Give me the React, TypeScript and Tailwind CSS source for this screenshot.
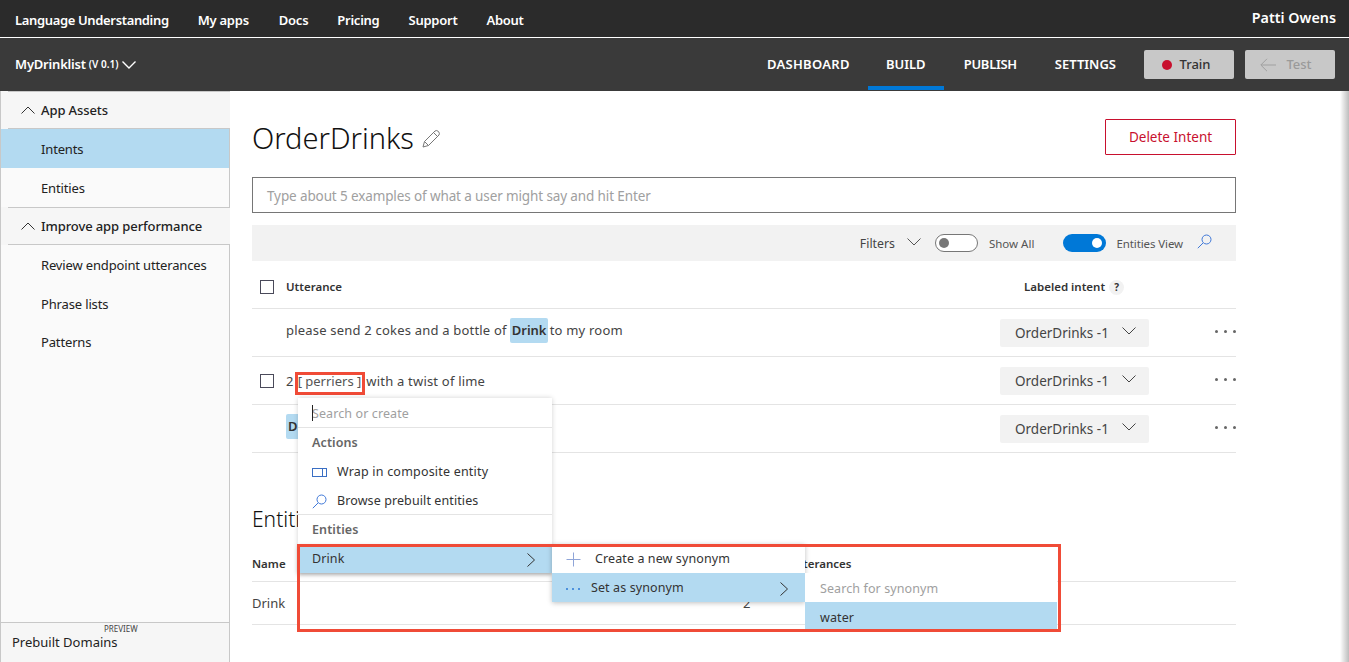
import React from "react";

const font = { fontFamily: '"Noto Sans", "Open Sans", sans-serif' };

function Chevron({ up = false, className = "", sw = 1 }: { up?: boolean; className?: string; sw?: number }) {
  return (
    <svg width="14" height="8" viewBox="0 0 14 8" fill="none" stroke="currentColor" strokeWidth={sw} className={className}>
      <path d={up ? "M0.5 7.5 L7 1 L13.5 7.5" : "M0.5 0.5 L7 7 L13.5 0.5"} />
    </svg>
  );
}

function ChevRight() {
  return (
    <svg width="8" height="14" viewBox="0 0 8 14" fill="none" stroke="#333" strokeWidth="1">
      <path d="M0.5 0.5 L7.5 7 L0.5 13.5" />
    </svg>
  );
}

function Search({ className = "" }: { className?: string }) {
  return (
    <svg width="15" height="15" viewBox="0 0 15 15" fill="none" stroke="#3f78d8" strokeWidth="1" className={className}>
      <circle cx="9.5" cy="5.5" r="4.5" />
      <path d="M6 9 L0.8 14.2" />
    </svg>
  );
}

function Check() {
  return <div className="w-[14px] h-[14px] border border-[#4a4a5a] bg-white" />;
}

function SideHead({ label }: { label: string }) {
  return (
    <div className="bg-[#f6f6f6] -mr-px">
      <div className="h-[1px] ml-[7px] bg-[#c8c8c8]" />
      <div className="h-[36px] flex items-center pl-[20px] gap-[6px] text-[13px] font-medium tracking-[-0.1px] text-[#222]">
        <Chevron up className="text-[#333]" />
        <span className="pt-[2px]">{label}</span>
      </div>
      <div className="h-[1px] ml-[7px] bg-[#c8c8c8]" />
    </div>
  );
}

function SideItem({ label, active = false }: { label: string; active?: boolean }) {
  return (
    <div className={`h-[39px] pt-[2px] flex items-center pl-[40px] text-[13px] tracking-[-0.15px] text-[#222] ${active ? "bg-[#b3daf1]" : ""}`}>{label}</div>
  );
}

function IntentPill() {
  return (
    <div className="w-[149px] h-[28px] pt-[1px] bg-[#f2f2f2] rounded-[2px] flex items-center pl-[15px] text-[13.5px] text-[#444]">
      <span>OrderDrinks -1</span>
      <Chevron className="ml-[13px] text-[#444] -mt-1" />
    </div>
  );
}

function Dots() {
  return (
    <div className="flex gap-[6px] items-center w-[21px] -mt-[2px]">
      <i className="w-[3px] h-[3px] rounded-full bg-[#666]" />
      <i className="w-[3px] h-[3px] rounded-full bg-[#666]" />
      <i className="w-[3px] h-[3px] rounded-full bg-[#666]" />
    </div>
  );
}

function Row({ children, check = false, textClass = "" }: { children: React.ReactNode; check?: boolean; textClass?: string }) {
  return (
    <div className="h-[48px] border-b border-[#e4e4e4] flex items-center relative">
      <div className="w-[34px] pl-[8px] shrink-0 flex">{check ? <Check /> : null}</div>
      <div className={`w-[714px] text-[13px] text-[#444] tracking-[0.2px] flex items-center ${textClass}`}>{children}</div>
      <IntentPill />
      <div className="ml-auto">
        <Dots />
      </div>
    </div>
  );
}

export default function App() {
  return (
    <div style={font} className="w-[1349px] h-[662px] overflow-hidden bg-white flex flex-col relative">
      <header className="h-[37px] bg-[#2b2b2b] flex items-center pl-[15px] pr-[13px] pt-[4px] text-[13px] font-semibold tracking-[-0.25px] text-white shrink-0">
        <span className="mr-[29px] tracking-[-0.35px]">Language Understanding</span>
        <span className="mr-[30px]">My apps</span>
        <span className="mr-[29px]">Docs</span>
        <span className="mr-[29px]">Pricing</span>
        <span className="mr-[29px]">Support</span>
        <span>About</span>
        <span className="ml-auto mb-[6px] text-[14.3px] tracking-normal">Patti Owens</span>
      </header>
      <nav className="h-[54px] border-t border-white bg-[#3a3a3a] flex items-center pl-[15px] pr-[14px] text-white font-semibold shrink-0">
        <span className="text-[13px] tracking-[-0.2px]">MyDrinklist</span>
        <span className="text-[10px] ml-[3px]">(V 0.1)</span>
        <Chevron sw={1.4} className="ml-[4px] text-white" />
        <div className="ml-auto flex h-full items-start text-[13px]">
          <div className="flex items-center mr-[18px] h-[52px] pt-[2px] tracking-[0.3px]">DASHBOARD</div>
          <div className="flex items-center justify-center w-[76px] mr-[20px] border-b-[4px] border-[#0078d7] h-[52px] pt-[6px]">BUILD</div>
          <div className="flex items-center mr-[38px] h-[52px] pt-[2px] tracking-[-0.3px]">PUBLISH</div>
          <div className="flex items-center mr-[28px] h-[52px] pt-[2px]">SETTINGS</div>
          <div className="flex items-center gap-[11px] h-[53px]">
            <button className="w-[90px] h-[29px] pr-[6px] rounded-[2px] bg-[#c8c8c8] text-[#333] font-medium flex items-center justify-center gap-[8px]">
              <i className="w-[10px] h-[10px] rounded-full bg-[#c8102e]" />
              Train
            </button>
            <button className="w-[90px] h-[29px] pr-[8px] rounded-[2px] bg-[#c8c8c8] text-[#9a9a9a] font-medium flex items-center justify-center gap-[10px]">
              <svg width="16" height="14" viewBox="0 0 16 14" fill="none" stroke="#a0a0a0" strokeWidth="1">
                <path d="M16 7 H1 M7 0.8 L0.8 7 L7 13.2" />
              </svg>
              Test
            </button>
          </div>
        </div>
      </nav>
      <div className="flex flex-1 min-h-0">
        <aside className="w-[230px] shrink-0 bg-[#fafafa] border-l border-r border-[#c8c8c8] flex flex-col">
          <SideHead label="App Assets" />
          <SideItem label="Intents" active />
          <SideItem label="Entities" />
          <SideHead label="Improve app performance" />
          <SideItem label="Review endpoint utterances" />
          <SideItem label="Phrase lists" />
          <div className="h-[38px] pt-[2px] flex items-center pl-[40px] text-[13px] tracking-[-0.15px] text-[#222]">Patterns</div>
          <div className="mt-auto h-[40px] border-t border-[#c8c8c8] bg-[#f6f6f6] relative pl-[11px] pt-[10px] text-[13px] text-[#222]">
            <span className="absolute left-[103px] top-0 text-[8px] text-[#444]">PREVIEW</span>
            Prebuilt Domains
          </div>
        </aside>
        <main className="w-[984px] ml-[22px] relative">
          <div className="flex justify-between items-start pt-[28px]">
            <h1 className="text-[29px] leading-[36px] pt-[1px] font-light text-[#111] flex items-center gap-[8px]">
              OrderDrinks
              <svg width="19" height="19" viewBox="0 0 19 19" fill="none" stroke="#777" strokeWidth="1">
                <path d="M1 18 L2.5 12.5 L13 2 Q14.5 0.8 16.5 2.5 Q18 4.5 17 6 L6.5 16.5 Z M2.5 12.5 L6.5 16.5 M11.5 3.5 L15.5 7.5" />
              </svg>
            </h1>
            <button className="w-[131px] h-[36px] border border-[#c8102e] rounded-[1px] text-[13.5px] text-[#c8102e]">
              Delete Intent
            </button>
          </div>
          <div className="mt-[21px] h-[36px] pt-[2px] border border-[#767676] flex items-center pl-[14px] text-[13.5px] tracking-[-0.12px] text-[#a0a0a0]">
            Type about 5 examples of what a user might say and hit Enter
          </div>
          <div className="mt-[12px] h-[36px] bg-[#f2f2f2] flex items-center justify-end pr-[24px] text-[11.5px] text-[#555]">
            <span className="text-[12.3px] text-[#444] pt-[2px]">Filters</span>
            <Chevron className="ml-[12px] text-[#555] -mt-[3px]" />
            <div className="ml-[14px] w-[43px] h-[18px] rounded-full border border-[#777] bg-white flex items-center pl-[3px]">
              <i className="w-[10px] h-[10px] rounded-full bg-[#777]" />
            </div>
            <span className="ml-[11px] pt-[2px]">Show All</span>
            <div className="ml-[29px] w-[43px] h-[18px] rounded-full bg-[#0078d7] flex items-center justify-end pr-[4px]">
              <i className="w-[10px] h-[10px] rounded-full bg-white" />
            </div>
            <span className="ml-[10px] pt-[2px] tracking-[-0.1px]">Entities View</span>
            <Search className="ml-[14px] -mt-[3px]" />
          </div>
          <div className="h-[48px] pt-[5px] border-b border-[#e4e4e4] flex items-center text-[11.5px] font-semibold text-[#333]">
            <div className="w-[34px] pl-[8px] shrink-0 flex">
              <Check />
            </div>
            <span className="w-[738px]">Utterance</span>
            <span>Labeled intent</span>
            <span className="ml-[4px] w-[15px] h-[15px] rounded-full bg-[#f2f2f2] flex items-center justify-center text-[10px] font-bold">?</span>
          </div>
          <Row textClass="-mt-[4px]">
            please send 2 cokes and a bottle of
            <b className="ml-[3px] mr-[2px] px-[2px] h-[25px] w-[38px] leading-[25px] rounded-[2px] bg-[#b3daf1] font-semibold text-[#333] tracking-normal">Drink</b>
            to my room
          </Row>
          <Row check textClass="pt-[2px]">
            2
            <span className="relative ml-[4px] mr-[5px] tracking-normal text-[#555]">
              [ perriers ]
              <span className="absolute -left-[3px] -right-[4px] top-[0px] -bottom-[4px] border-[3px] border-[#f04b37]" />
            </span>
            with a twist of lime
          </Row>
          <Row textClass="-mt-[4px]">
            <b className="px-[2px] h-[25px] leading-[25px] rounded-[2px] bg-[#b3daf1] font-semibold text-[#333] tracking-normal">Drink</b>
          </Row>
          <h2 className="mt-[51px] text-[21px] leading-[30px] font-light text-[#111]">Entities</h2>
          <div className="mt-[15px] h-[33px] pb-[3px] border-b border-[#e4e4e4] flex items-center text-[11.5px] font-semibold text-[#333]">
            <span className="w-[492px]">Name</span>
            <span>Labeled utterances</span>
          </div>
          <div className="h-[43px] pt-[2px] border-b border-[#e4e4e4] flex items-center text-[13px] text-[#444]">
            <span className="w-[491px]">Drink</span>
            <span>2</span>
          </div>

          {/* Entity picker overlay */}
          <div className="absolute left-[46px] top-[307px] w-[254px] bg-white shadow-[0_0_5px_rgba(0,0,0,0.18)] text-[12.5px] tracking-[0.1px] text-[#333]">
            <div className="h-[30px] pt-[3px] border-b border-[#e4e4e4] flex items-center pl-[14px] text-[#a0a0a0] relative">
              <i className="w-[1px] h-[16px] bg-[#222] absolute left-[14px] top-[7px]" />
              Search or create
            </div>
            <div className="h-[29px] pt-[2px] flex items-center pl-[14px] font-semibold text-[#666]">Actions</div>
            <div className="h-[29px] pt-[2px] flex items-center pl-[14px] gap-[10px] tracking-[0.2px]">
              <svg width="15" height="9" viewBox="0 0 15 9" fill="none" stroke="#3a6fc4" strokeWidth="1">
                <rect x="0.5" y="0.5" width="14" height="8" />
                <path d="M10.5 0.5 V8.5" />
              </svg>
              Wrap in composite entity
            </div>
            <div className="h-[29px] pt-[2px] border-b border-[#e4e4e4] flex items-center pl-[14px] gap-[10px]">
              <Search />
              Browse prebuilt entities
            </div>
            <div className="h-[29px] pt-[2px] flex items-center pl-[14px] font-semibold text-[#666]">Entities</div>
            <div className="h-[29px] pt-[2px] bg-[#b3daf1] flex items-center pl-[14px] pr-[17px] justify-between shadow-[0_2px_4px_rgba(0,0,0,0.25)]">
              Drink
              <ChevRight />
            </div>
          </div>
          <div className="absolute left-[300px] top-[453px] w-[253px] bg-white shadow-[0_1px_5px_rgba(0,0,0,0.25)] text-[12.5px] tracking-[0.1px] text-[#333]">
            <div className="h-[29px] pt-[2px] flex items-center pl-[14px] gap-[14px]">
              <svg width="15" height="15" viewBox="0 0 15 15" fill="none" stroke="#8fa5d8" strokeWidth="1">
                <path d="M7.5 0.5 V14.5 M0.5 7.5 H14.5" />
              </svg>
              Create a new synonym
            </div>
            <div className="h-[29px] pt-[2px] bg-[#b3daf1] flex items-center pl-[14px] pr-[17px]">
              <span className="flex gap-[4px] mr-[11px]">
                <i className="w-[2px] h-[2px] rounded-full bg-[#2b78d6]" />
                <i className="w-[2px] h-[2px] rounded-full bg-[#2b78d6]" />
                <i className="w-[2px] h-[2px] rounded-full bg-[#2b78d6]" />
              </span>
              Set as synonym
              <span className="ml-auto">
                <ChevRight />
              </span>
            </div>
          </div>
          <div className="absolute left-[553px] top-[482px] w-[252px] bg-white text-[12.5px] tracking-[0.1px] text-[#333]">
            <div className="h-[29px] pt-[4px] flex items-center pl-[15px] text-[#a0a0a0]">Search for synonym</div>
            <div className="h-[27px] pt-[5px] bg-[#b3daf1] flex items-center pl-[15px]">water</div>
          </div>
          <div className="absolute left-[45px] top-[453px] w-[764px] h-[88px] border-[3px] border-[#f04b37] pointer-events-none" />
        </main>
      </div>
      <div className="absolute right-0 top-[91px] bottom-0 w-[9px] bg-linear-to-r from-white to-[#bdbdbd]" />
    </div>
  );
}
